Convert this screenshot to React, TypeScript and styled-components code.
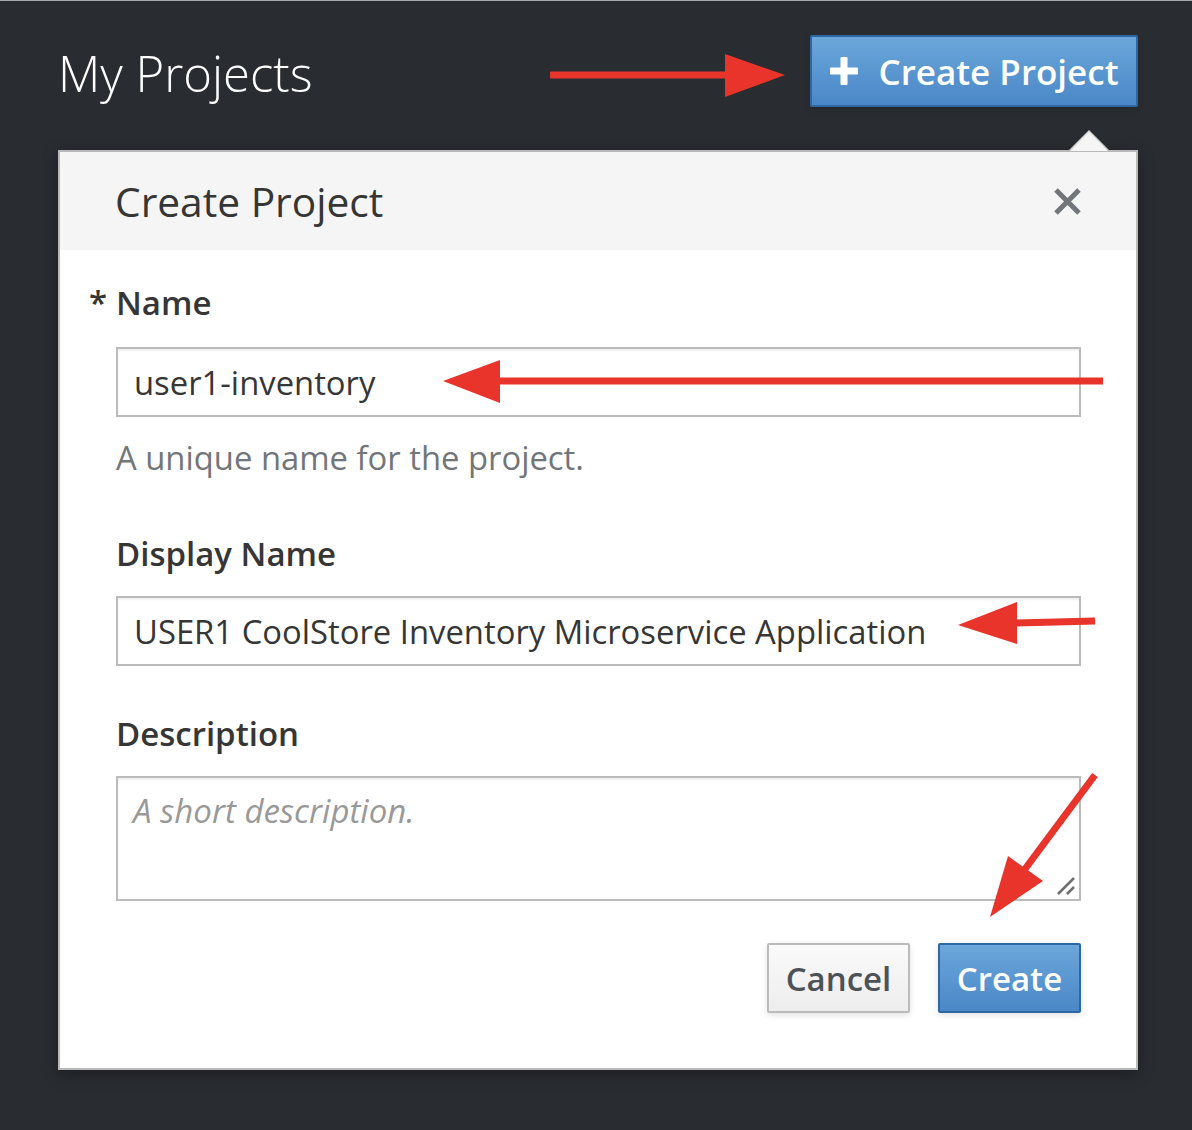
import React from "react";
import styled, { createGlobalStyle } from "styled-components";

const GlobalStyle = createGlobalStyle`
  html, body { margin: 0; padding: 0; }
  body {
    background: #292c31;
    font-family: "Open Sans", "Noto Sans", sans-serif;
  }
  * { box-sizing: border-box; }
`;

const Page = styled.div`
  position: relative;
  width: 1192px;
  height: 1130px;
  padding: 35px 54px 0 58px;
  overflow: hidden;
  box-shadow: inset 0 1px 0 #a7a9ac;
`;

const TopBar = styled.div`
  display: flex;
  align-items: center;
  justify-content: space-between;
  height: 72px;
`;

const PageTitle = styled.h1`
  margin: 0;
  font-size: 49px;
  font-weight: 300;
  line-height: 1;
  color: #ffffff;
  position: relative;
  top: 2px;
`;

const PrimaryButton = styled.button<{ $w: number; $h: number; $size: number }>`
  display: inline-flex;
  align-items: center;
  justify-content: center;
  gap: 21px;
  width: ${(p) => p.$w}px;
  height: ${(p) => p.$h}px;
  padding: 0;
  border: 2px solid #2d68a5;
  border-radius: 2px;
  background: linear-gradient(to bottom, #6ba7da 0%, #4a87c7 100%);
  color: #ffffff;
  font-family: "Open Sans", "Noto Sans", sans-serif;
  font-size: ${(p) => p.$size}px;
  font-weight: 600;
  box-shadow: 0 2px 6px rgba(0, 0, 0, 0.12);
`;

const SecondaryButton = styled.button`
  width: 143px;
  height: 70px;
  padding: 0;
  border: 2px solid #bbbbbb;
  border-radius: 2px;
  background: linear-gradient(to bottom, #fafafa 0%, #ededed 100%);
  color: #4d5258;
  font-family: "Open Sans", "Noto Sans", sans-serif;
  font-size: 33px;
  font-weight: 600;
  box-shadow: 0 2px 6px rgba(0, 0, 0, 0.12);
`;

const Popover = styled.div`
  position: relative;
  margin-top: 43px;
  width: 1080px;
  height: 920px;
  border: 2px solid #b9b9b9;
  background: #ffffff;
  box-shadow: 0 4px 14px rgba(0, 0, 0, 0.35);
  display: flex;
  flex-direction: column;
`;

const Caret = styled.div`
  position: absolute;
  top: -20px;
  right: 28px;
  width: 0;
  height: 0;
  border-left: 19px solid transparent;
  border-right: 19px solid transparent;
  border-bottom: 19px solid #f5f5f5;
  &::before {
    content: "";
    position: absolute;
    left: -21px;
    top: -2px;
    border-left: 21px solid transparent;
    border-right: 21px solid transparent;
    border-bottom: 21px solid #d4d4d4;
    z-index: -1;
  }
`;

const PopHeader = styled.div`
  height: 98px;
  background: #f5f5f5;
  display: flex;
  align-items: center;
  justify-content: space-between;
  padding: 0 54px 0 55px;
`;

const PopTitle = styled.h2`
  margin: 0;
  font-size: 40.7px;
  font-weight: 400;
  color: #363636;
  line-height: 1;
`;

const CloseButton = styled.button`
  width: 29px;
  height: 29px;
  padding: 0;
  border: 0;
  background: transparent;
  display: flex;
`;

const PopBody = styled.div`
  flex: 1;
  padding: 33px 55px 0 56px;
  display: flex;
  flex-direction: column;
`;

const Label = styled.label`
  display: flex;
  font-size: 33px;
  font-weight: 600;
  line-height: 40px;
  color: #363636;
`;

const Required = styled.span`
  width: 27px;
  margin-left: -27px;
`;

const TextInput = styled.div<{ $mt: number }>`
  margin-top: ${(p) => p.$mt}px;
  height: 70px;
  border: 2px solid #bbbbbb;
  display: flex;
  align-items: center;
  padding: 0 16px;
  font-size: 32.8px;
  color: #363636;
  box-shadow: inset 0 2px 2px rgba(0, 0, 0, 0.06);
`;

const HelpText = styled.div`
  margin-top: 21px;
  font-size: 32.8px;
  line-height: 40px;
  color: #72767b;
`;

const Group = styled.div<{ $mt: number }>`
  margin-top: ${(p) => p.$mt}px;
  display: flex;
  flex-direction: column;
`;

const TextAreaBox = styled.div`
  position: relative;
  margin-top: 22px;
  height: 125px;
  border: 2px solid #bbbbbb;
  padding: 12px 15px;
  font-size: 33px;
  font-style: italic;
  color: #999999;
  line-height: 42px;
  box-shadow: inset 0 2px 2px rgba(0, 0, 0, 0.06);
`;

const Grip = styled.svg`
  position: absolute;
  right: 3px;
  bottom: 3px;
`;

const Actions = styled.div`
  margin-top: 42px;
  display: flex;
  justify-content: flex-end;
  gap: 28px;
`;

const Overlay = styled.svg`
  position: absolute;
  left: 0;
  top: 0;
  pointer-events: none;
`;

const RED = "#e8342a";

export default function App() {
  return (
    <>
      <GlobalStyle />
      <Page>
        <TopBar>
          <PageTitle>My Projects</PageTitle>
          <PrimaryButton $w={328} $h={72} $size={35}>
            <svg width="28" height="28" viewBox="0 0 28 28">
              <rect x="0" y="10.5" width="28" height="7" rx="1" fill="#fff" />
              <rect x="10.5" y="0" width="7" height="28" rx="1" fill="#fff" />
            </svg>
            Create Project
          </PrimaryButton>
        </TopBar>
        <Popover>
          <Caret />
          <PopHeader>
            <PopTitle>Create Project</PopTitle>
            <CloseButton aria-label="Close">
              <svg width="29" height="29" viewBox="0 0 29 29">
                <path d="M3 3 L26 26 M26 3 L3 26" stroke="#72767b" strokeWidth="5" />
              </svg>
            </CloseButton>
          </PopHeader>
          <PopBody>
            <Label>
              <Required>*</Required>Name
            </Label>
            <TextInput $mt={24}>user1-inventory</TextInput>
            <HelpText>A unique name for the project.</HelpText>
            <Group $mt={56}>
              <Label>Display Name</Label>
              <TextInput $mt={22}>USER1 CoolStore Inventory Microservice Application</TextInput>
            </Group>
            <Group $mt={48}>
              <Label>Description</Label>
              <TextAreaBox>
                A short description.
                <Grip width="20" height="20" viewBox="0 0 20 20">
                  <path d="M2 18 L18 2 M11 18 L18 11" stroke="#6f6f6f" strokeWidth="2.5" />
                </Grip>
              </TextAreaBox>
            </Group>
            <Actions>
              <SecondaryButton>Cancel</SecondaryButton>
              <PrimaryButton $w={143} $h={70} $size={33}>
                Create
              </PrimaryButton>
            </Actions>
          </PopBody>
        </Popover>
        <Overlay width="1192" height="1130" viewBox="0 0 1192 1130">
          <line x1="550" y1="75" x2="730" y2="75" stroke={RED} strokeWidth="7" />
          <polygon points="725,54 785,75 725,97" fill={RED} />
          <line x1="495" y1="381" x2="1103" y2="381" stroke={RED} strokeWidth="7" />
          <polygon points="500,360 443,381 500,403" fill={RED} />
          <line x1="1012" y1="623" x2="1095" y2="621" stroke={RED} strokeWidth="7" />
          <polygon points="1017,602 958,625 1017,644" fill={RED} />
          <line x1="1095" y1="775" x2="1022" y2="873" stroke={RED} strokeWidth="7" />
          <polygon points="1008,856 990,917 1043,881" fill={RED} />
        </Overlay>
      </Page>
    </>
  );
}
